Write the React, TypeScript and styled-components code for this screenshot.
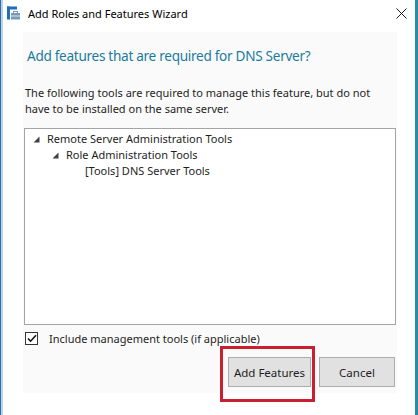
import React from "react";
import styled, { createGlobalStyle } from "styled-components";

const GlobalStyle = createGlobalStyle`
    html, body {
        margin: 0;
        padding: 0;
        background: #ffffff;
    }
    body {
        font-family: "Noto Sans", "Open Sans", sans-serif;
        color: #1e1e1e;
    }
`;

const StyledWindow = styled.div`
    width: 418px;
    height: 415px;
    box-sizing: border-box;
    background: #ffffff;
    border-left: 1px solid #2f6fa6;
    border-right: 3px solid #2d8aa6;
    box-shadow: inset 2px 0 0 #b9d4ea;
    display: flex;
    flex-direction: column;
    overflow: hidden;
`;
StyledWindow.displayName = "StyledWindow";

const StyledTitleBar = styled.div`
    height: 27px;
    display: flex;
    align-items: center;
    padding: 0 8px 0 5px;
    font-size: 11px;
    color: #000000;
    > span {
        margin-left: 7px;
        flex-grow: 1;
    }
`;
StyledTitleBar.displayName = "StyledTitleBar";

const StyledPanel = styled.div`
    margin: 5px 18px 0 22px;
    height: 361px;
    background: #fafafa;
    display: flex;
    flex-direction: column;
    padding: 0 1px;
`;
StyledPanel.displayName = "StyledPanel";

const StyledHeading = styled.div`
    color: #1b7b9c;
    font-size: 13.6px;
    letter-spacing: -0.3px;
    padding: 13px 0 0 3px;
    line-height: 22px;
`;
StyledHeading.displayName = "StyledHeading";

const StyledText = styled.p`
    margin: 18px 0 0 1px;
    font-size: 11px;
    line-height: 16px;
`;
StyledText.displayName = "StyledText";

const StyledTree = styled.div`
    margin-top: 11px;
    height: 197px;
    box-sizing: border-box;
    background: #ffffff;
    border: 1px solid #a4a4a4;
    padding-top: 2px;
    font-size: 11px;
    line-height: 16px;
`;
StyledTree.displayName = "StyledTree";

const StyledTreeRow = styled.div<{ $level: number }>`
    display: flex;
    align-items: center;
    padding-left: ${p => 8 + p.$level * 19}px;
`;
StyledTreeRow.displayName = "StyledTreeRow";

const StyledArrow = styled.span<{ $show: boolean }>`
    width: 14px;
    display: inline-flex;
    align-items: center;
    visibility: ${p => (p.$show ? "visible" : "hidden")};
`;
StyledArrow.displayName = "StyledArrow";

const StyledCheckRow = styled.div`
    display: flex;
    align-items: center;
    gap: 11px;
    margin-top: 5px;
    height: 16px;
    font-size: 11px;
`;
StyledCheckRow.displayName = "StyledCheckRow";

const StyledCheckbox = styled.div`
    width: 11px;
    height: 11px;
    flex-shrink: 0;
    border: 1px solid #333333;
    background: #ffffff;
    display: flex;
    align-items: center;
    justify-content: center;
    margin-left: 1px;
`;
StyledCheckbox.displayName = "StyledCheckbox";

const StyledButtons = styled.div`
    display: flex;
    justify-content: flex-end;
    gap: 8px;
    margin-top: 11px;
    padding-right: 1px;
`;
StyledButtons.displayName = "StyledButtons";

const StyledButton = styled.button<{ $width: number }>`
    width: ${p => p.$width}px;
    height: 30px;
    background: #e1e1e1;
    border: 1px solid #adadad;
    font-family: "Noto Sans", "Open Sans", sans-serif;
    font-size: 11.5px;
    color: #1e1e1e;
    padding: 0;
`;
StyledButton.displayName = "StyledButton";

const StyledHighlight = styled.div`
    position: relative;
    display: flex;
    &::after {
        content: "";
        position: absolute;
        left: -8px;
        top: -11px;
        width: 89px;
        height: 50px;
        border: 3px solid #c8202f;
        pointer-events: none;
    }
`;
StyledHighlight.displayName = "StyledHighlight";

const WizardIcon = () => (
    <svg width="15" height="15" viewBox="0 0 15 15">
        <rect x="1" y="0.5" width="3" height="13" fill="#1e6fb8" />
        <rect x="1" y="0.5" width="10" height="3" fill="#1e6fb8" />
        <rect x="5" y="7" width="9" height="6.5" fill="#7a9bb8" />
        <rect x="7.5" y="5.5" width="4" height="2" fill="none" stroke="#7a9bb8" strokeWidth="1" />
        <rect x="5" y="9.5" width="9" height="1" fill="#d8e4ee" />
    </svg>
);

const CloseIcon = () => (
    <svg width="11" height="11" viewBox="0 0 11 11">
        <path d="M0.5 0.5 L10.5 10.5 M10.5 0.5 L0.5 10.5" stroke="#1a1a1a" strokeWidth="1" />
    </svg>
);

const Triangle = () => (
    <svg width="7" height="7" viewBox="0 0 7 7">
        <polygon points="6.5,0.5 6.5,6.5 0.5,6.5" fill="#404040" />
    </svg>
);

const Check = () => (
    <svg width="10" height="9" viewBox="0 0 10 9">
        <path d="M1 4.5 L3.6 7.2 L9 1.2" stroke="#111" strokeWidth="1.6" fill="none" />
    </svg>
);

const treeItems = [
    { label: "Remote Server Administration Tools", level: 0, parent: true },
    { label: "Role Administration Tools", level: 1, parent: true },
    { label: "[Tools] DNS Server Tools", level: 2, parent: false },
];

export default function App() {
    return (
        <>
            <GlobalStyle />
            <StyledWindow>
                <StyledTitleBar>
                    <WizardIcon />
                    <span>Add Roles and Features Wizard</span>
                    <CloseIcon />
                </StyledTitleBar>
                <StyledPanel>
                    <StyledHeading>Add features that are required for DNS Server?</StyledHeading>
                    <StyledText>
                        The following tools are required to manage this feature, but do not
                        <br />
                        have to be installed on the same server.
                    </StyledText>
                    <StyledTree>
                        {treeItems.map(item =>
                            <StyledTreeRow key={item.label} $level={item.level}>
                                <StyledArrow $show={item.parent}><Triangle /></StyledArrow>
                                {item.label}
                            </StyledTreeRow>
                        )}
                    </StyledTree>
                    <StyledCheckRow>
                        <StyledCheckbox><Check /></StyledCheckbox>
                        <span>Include management tools (if applicable)</span>
                    </StyledCheckRow>
                    <StyledButtons>
                        <StyledHighlight>
                            <StyledButton $width={83}>Add Features</StyledButton>
                        </StyledHighlight>
                        <StyledButton $width={76}>Cancel</StyledButton>
                    </StyledButtons>
                </StyledPanel>
            </StyledWindow>
        </>
    );
}
